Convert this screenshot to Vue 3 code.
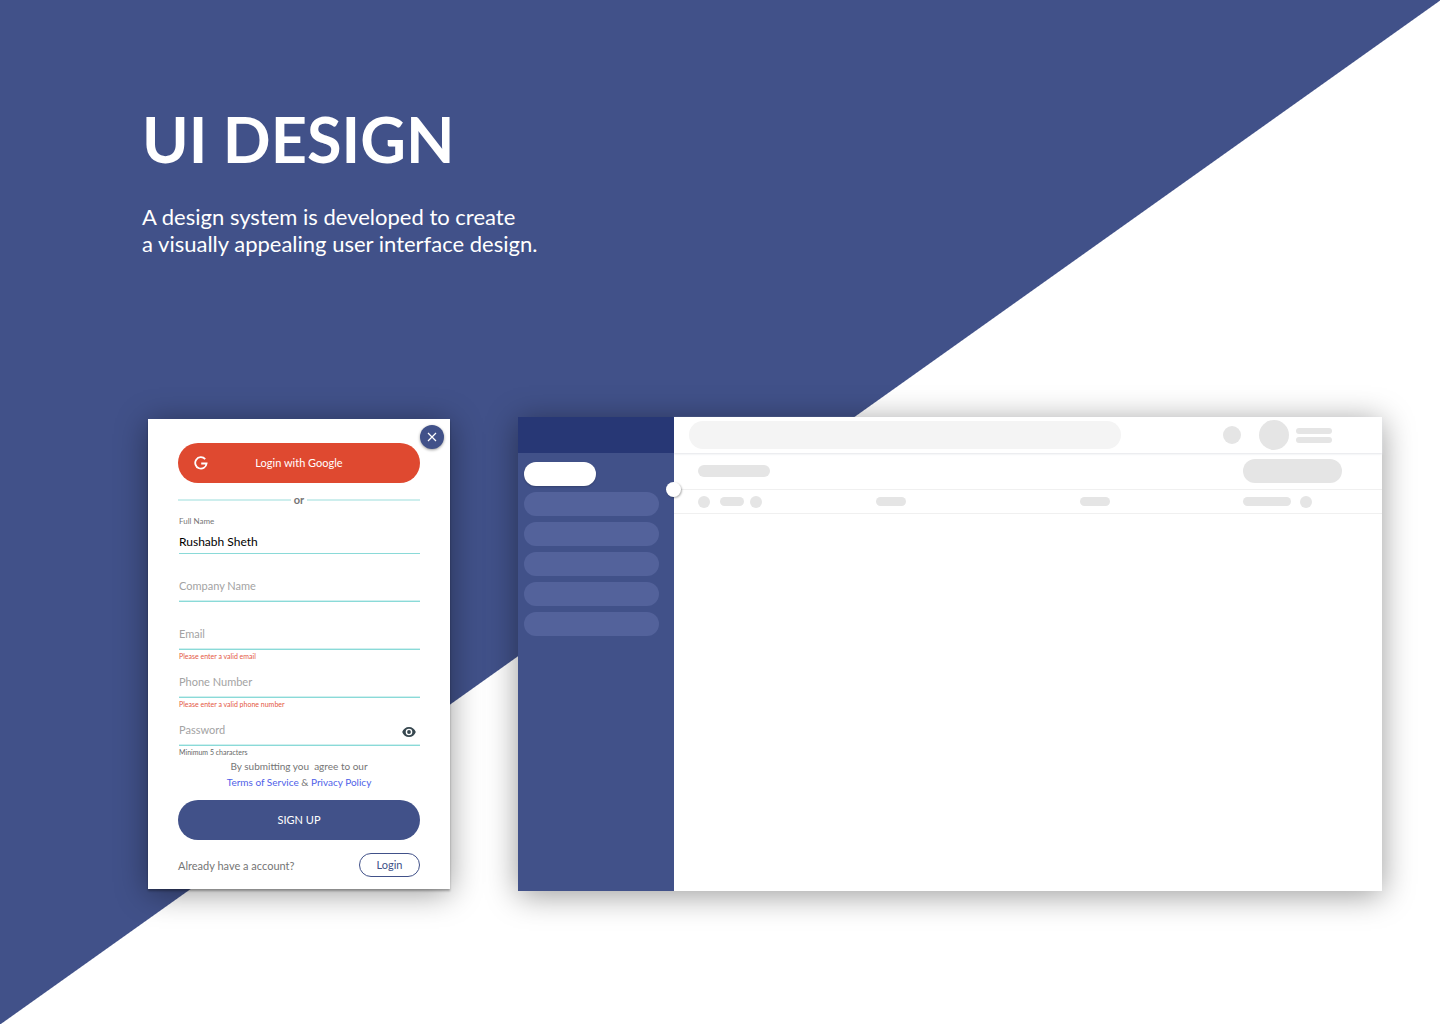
<script setup>
import { reactive } from 'vue'

const form = reactive({
  name: 'Rushabh Sheth',
  company: '',
  email: '',
  phone: '',
  password: '',
})

const fields = [
  { key: 'company', label: 'Company Name', type: 'text' },
  { key: 'email', label: 'Email', type: 'email', error: 'Please enter a valid email' },
  { key: 'phone', label: 'Phone Number', type: 'tel', error: 'Please enter a valid phone number' },
  { key: 'password', label: 'Password', type: 'password', hint: 'Minimum 5 characters' },
]
</script>

<template>
  <main class="page">
    <header class="hero">
      <h1>UI DESIGN</h1>
      <p>A design system is developed to create<br />a visually appealing user interface design.</p>
    </header>

    <div class="showcase">
      <form class="card" novalidate @submit.prevent>
        <button type="button" class="close" aria-label="Close">
          <svg width="10" height="10" viewBox="0 0 10 10"><path d="M1 1l8 8M9 1L1 9" fill="none" stroke="#fff" stroke-width="1.2" /></svg>
        </button>

        <button type="button" class="google">
          <svg class="g" width="14" height="14" viewBox="0 0 14 14"><path d="M11.2 3.100A5.700 5.700 0 1 0 12.600 7.500H7.200" fill="none" stroke="#fff" stroke-width="1.800" /></svg>
          <span>Login with Google</span>
        </button>

        <div class="divider"><span>or</span></div>

        <div class="fields">
          <div class="field">
            <label class="caption" for="name">Full Name</label>
            <input id="name" v-model="form.name" class="filled" type="text" />
            <small></small>
          </div>

          <div v-for="f in fields" :key="f.key" class="field">
            <div class="control">
              <input :id="f.key" v-model="form[f.key]" :type="f.type" />
              <label class="resting" :class="{ covered: form[f.key] }" :for="f.key">{{ f.label }}</label>
              <button v-if="f.key === 'password'" type="button" class="eye" aria-label="Show password">
                <svg width="14" height="10" viewBox="0 0 14 10">
                  <path fill="#37474f" fill-rule="evenodd" d="M7 0C3.900 0 1.200 2 .2 5c1 3 3.700 5 6.800 5s5.800-2 6.800-5C12.800 2 10.100 0 7 0zm0 8.300A3.300 3.300 0 1 1 7 1.700a3.300 3.300 0 0 1 0 6.600zM7 3.100a1.900 1.900 0 1 0 0 3.800 1.900 1.900 0 0 0 0-3.800z" />
                </svg>
              </button>
            </div>
            <small :class="{ error: f.error }">{{ f.error || f.hint }}</small>
          </div>
        </div>

        <p class="terms">
          By submitting you&nbsp; agree to our<br />
          <a href="#terms">Terms of Service</a> &amp; <a href="#privacy">Privacy Policy</a>
        </p>

        <button type="submit" class="signup">SIGN UP</button>

        <div class="foot">
          <span>Already have a account?</span>
          <button type="button" class="login">Login</button>
        </div>
      </form>

      <section class="app">
        <aside class="side">
          <div class="brand"></div>
          <div class="menu">
            <div class="item active"></div>
            <div v-for="n in 5" :key="n" class="item"></div>
          </div>
          <div class="toggle"></div>
        </aside>
        <div class="body">
          <div class="topbar">
            <div class="search"></div>
            <div class="account">
              <i class="bell"></i>
              <i class="avatar"></i>
              <div class="lines"><i></i><i></i></div>
            </div>
          </div>
          <div class="toolbar">
            <i class="title"></i>
            <i class="action"></i>
          </div>
          <div class="columns">
            <div class="col first"><i class="dot"></i><i class="bar short"></i><i class="dot"></i></div>
            <div class="col"><i class="bar"></i></div>
            <div class="col"><i class="bar"></i></div>
            <div class="col last"><i class="bar long"></i><i class="dot"></i></div>
          </div>
        </div>
      </section>
    </div>
  </main>
</template>

<style>
body {
  margin: 0;
}
</style>

<style scoped>
* {
  box-sizing: border-box;
}
.page {
  min-height: 100vh;
  padding: 99px 58px 100px 142px;
  font-family: Lato, "Liberation Sans", sans-serif;
  background: linear-gradient(to bottom right, #415189 50%, #fff calc(50% + 1px));
}
button,
input {
  font-family: inherit;
  margin: 0;
  padding: 0;
  border: 0;
}
.hero {
  color: #fff;
}
h1 {
  margin: 0;
  font-size: 63px;
  line-height: 80px;
  font-weight: 700;
}
.hero p {
  margin: 24px 0 0;
  font-size: 22px;
  line-height: 27px;
}
.showcase {
  display: flex;
  align-items: center;
  gap: 68px;
  margin: 160px 0 0 6px;
}
.card {
  position: relative;
  flex: 0 0 302px;
  padding: 24px 30px 12px;
  background: #fff;
  box-shadow: 0 2px 2px rgba(0, 0, 0, 0.3), 0 4px 30px rgba(0, 0, 0, 0.4);
}
.close {
  position: absolute;
  top: 6px;
  right: 6px;
  display: flex;
  align-items: center;
  justify-content: center;
  width: 24px;
  height: 24px;
  border-radius: 50%;
  background: #415189;
  box-shadow: 0 1px 3px rgba(0, 0, 0, 0.4);
}
.google,
.signup {
  display: block;
  width: 100%;
  height: 40px;
  padding: 0 16px 1px;
  border-radius: 20px;
  color: #fff;
  font-size: 11px;
}
.google {
  display: grid;
  grid-template-columns: 14px 1fr 14px;
  align-items: center;
  background: #df4930;
}
.divider {
  display: flex;
  align-items: center;
  gap: 3px;
  height: 18px;
  margin: 8px 0 5px;
  font-size: 11px;
  font-weight: 700;
  line-height: 16px;
  color: #757575;
}
.divider::before,
.divider::after {
  content: "";
  flex: 1;
  height: 2px;
  background: #cdeeed;
}
.fields {
  display: grid;
  gap: 8px;
  padding-left: 1px;
}
.field {
  display: flex;
  flex-direction: column;
}
.control {
  display: grid;
  align-items: start;
}
.control > * {
  grid-area: 1 / 1;
}
.caption {
  font-size: 8px;
  line-height: 14px;
  color: #757575;
}
.resting {
  justify-self: start;
  font-size: 11px;
  line-height: 24px;
  color: #a3a3a3;
}
.covered {
  visibility: hidden;
}
.field input {
  width: 100%;
  height: 28px;
  border-bottom: 1px solid #8adad8;
  box-shadow: inset 0 -1px #d0f0ef;
  border-radius: 0;
  outline: 0;
  background: transparent;
  font-size: 11px;
  color: #000;
}
.field input.filled {
  height: 26px;
  padding-top: 1px;
  font-size: 12px;
  box-shadow: none;
}
.field small {
  height: 12px;
  font-size: 7px;
  line-height: 12px;
  color: #666;
}
.field small.error {
  color: #e4573f;
}
.eye {
  align-self: center;
  justify-self: end;
  display: flex;
  margin-right: 4px;
  background: none;
}
.terms {
  margin: 0 0 10px;
  font-size: 10px;
  line-height: 16px;
  text-align: center;
  color: #757575;
}
.terms a {
  color: #4f5fe8;
  text-decoration: none;
}
.signup {
  background: #415189;
}
.foot {
  display: flex;
  align-items: center;
  justify-content: space-between;
  margin-top: 13px;
  font-size: 11px;
  color: #757575;
}
.login {
  width: 61px;
  height: 24px;
  padding-bottom: 1px;
  border: 1px solid #415189;
  border-radius: 12px;
  background: #fff;
  color: #415189;
  font-size: 11px;
}
.app {
  position: relative;
  display: flex;
  flex: 1;
  min-height: 474px;
  background: #fff;
  box-shadow: 0 4px 30px rgba(0, 0, 0, 0.4);
}
.side {
  position: relative;
  flex: 0 0 156px;
  background: #415189;
}
.brand {
  height: 36px;
  background: #273775;
}
.menu {
  display: flex;
  flex-direction: column;
  gap: 6px;
  padding: 9px 15px 9px 6px;
}
.item {
  height: 24px;
  border-radius: 12px;
  background: #53629b;
}
.item.active {
  width: 72px;
  background: #fff;
  box-shadow: 0 1px 2px rgba(0, 0, 0, 0.2);
}
.toggle {
  position: absolute;
  top: 65px;
  right: -7px;
  width: 15px;
  height: 15px;
  border-radius: 50%;
  background: #fff;
  box-shadow: 1px 1px 2px rgba(0, 0, 0, 0.3);
}
.body {
  flex: 1;
}
.body i {
  display: block;
  border-radius: 16px;
  background: #e5e5e5;
}
.topbar {
  display: flex;
  align-items: center;
  justify-content: space-between;
  height: 36px;
  padding: 0 50px 0 15px;
  box-shadow: 0 1px 2px #e4e5ea;
}
.topbar .search {
  flex: 0 1 432px;
  height: 28px;
  border-radius: 14px;
  background: #f4f4f4;
}
.account {
  display: flex;
  align-items: center;
}
.bell {
  width: 18px;
  height: 18px;
  margin-right: 18px;
}
.avatar {
  width: 30px;
  height: 30px;
  margin-right: 7px;
}
.lines {
  display: grid;
  gap: 3px;
}
.lines i {
  width: 36px;
  height: 6px;
}
.toolbar {
  display: flex;
  align-items: center;
  justify-content: space-between;
  height: 37px;
  padding: 0 40px 0 24px;
  border-bottom: 1px solid #f0f0f0;
}
.title {
  width: 72px;
  height: 12px;
}
.action {
  width: 99px;
  height: 24px;
}
.columns {
  display: grid;
  grid-template-columns: 178fr 204fr 163fr 99fr;
  height: 24px;
  padding: 0 40px 0 24px;
  border-bottom: 1px solid #f0f0f0;
}
.col {
  display: flex;
  align-items: center;
}
.first {
  gap: 6px;
}
.first .dot:first-child {
  margin-right: 4px;
}
.last {
  gap: 9px;
}
.dot {
  width: 12px;
  height: 12px;
}
.bar {
  width: 30px;
  height: 9px;
}
.short {
  width: 24px;
}
.long {
  width: 48px;
}
</style>
